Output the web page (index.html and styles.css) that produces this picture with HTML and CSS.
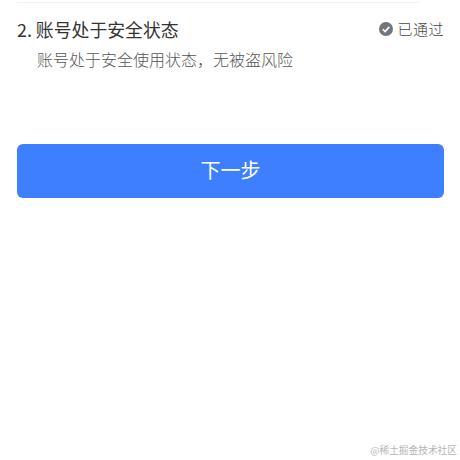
FILE: index.html
```html
<!DOCTYPE html>
<html lang="zh-CN">
<head>
    <meta charset="UTF-8">
    <title>账号状态</title>
    <link rel="stylesheet" href="styles.css">
</head>
<body>
    <div class="divider"></div>
    <section class="check-item">
        <div class="check-head">
            <h3 class="check-title">2. 账号处于安全状态</h3>
            <div class="check-status">
                <svg class="status-icon" viewBox="0 0 14 14" width="14" height="14">
                    <circle cx="7" cy="7" r="7" fill="#73767a"/>
                    <path d="M3.8 7.2 L6.1 9.5 L10.3 4.9" fill="none" stroke="#fff" stroke-width="1.6"/>
                </svg>
                <span>已通过</span>
            </div>
        </div>
        <p class="check-desc">账号处于安全使用状态，无被盗风险</p>
    </section>
    <button class="next-btn" type="button">下一步</button>
    <footer class="watermark">@稀土掘金技术社区</footer>
</body>
</html>
```

FILE: styles.css
```css
* {
    box-sizing: border-box;
    margin: 0;
    padding: 0;
}

html, body {
    width: 100%;
    height: 100%;
}

body {
    display: flex;
    flex-direction: column;
    padding: 2px 16px 0 17px;
    background: #fff;
    font-family: "Noto Sans CJK SC", "Noto Sans", sans-serif;
}

.divider {
    height: 1px;
    margin-right: 25px;
    background: #f2f2f2;
}

.check-item {
    height: 141px;
    padding-top: 14px;
}

.check-head {
    display: flex;
    justify-content: space-between;
    align-items: center;
    height: 24px;
}

.check-title {
    font-size: 17.85px;
    font-weight: 400;
    color: #333;
}

.check-status {
    display: flex;
    align-items: center;
    gap: 4px;
    margin-top: -1px;
    font-size: 15px;
    font-weight: 300;
    letter-spacing: 0.5px;
    color: #444;
}

.check-desc {
    margin-top: 6px;
    padding-left: 20px;
    font-size: 16px;
    font-weight: 300;
    line-height: 24px;
    color: #555;
}

.next-btn {
    height: 54px;
    padding-bottom: 3px;
    border: none;
    border-radius: 6px;
    background: #3e7fff;
    color: #fff;
    font-family: inherit;
    font-size: 20px;
    font-weight: 400;
}

.watermark {
    margin-top: auto;
    margin-right: -13px;
    padding-bottom: 2px;
    text-align: right;
    font-size: 9.7px;
    line-height: 16px;
    color: #b4b4b4;
}
```
